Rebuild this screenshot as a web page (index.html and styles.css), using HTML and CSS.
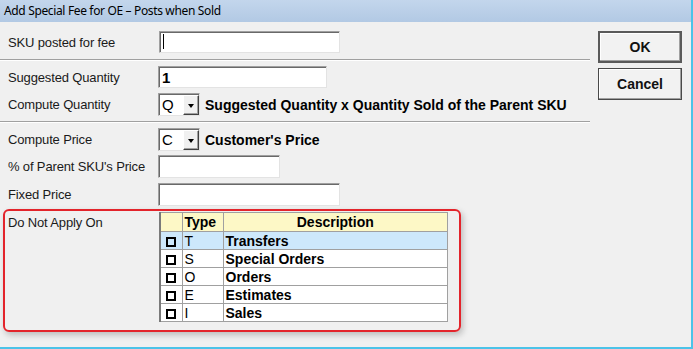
FILE: index.html
```html
<!DOCTYPE html>
<html lang="en">
<head>
    <meta charset="UTF-8">
    <title>Add Special Fee for OE</title>
    <link rel="stylesheet" href="styles.css">
</head>
<body>
    <div class="window">
        <div class="title-bar">Add Special Fee for OE – Posts when Sold</div>
        <div class="dialog">
            <div class="form">
                <div class="row row-first">
                    <span class="label">SKU posted for fee</span>
                    <div class="field field-sku"><span class="caret"></span></div>
                </div>
                <div class="separator"></div>
                <div class="row">
                    <span class="label">Suggested Quantity</span>
                    <div class="field field-qty">1</div>
                </div>
                <div class="row row-combo">
                    <span class="label">Compute Quantity</span>
                    <div class="combo">
                        <span class="combo-value">Q</span>
                        <span class="combo-btn"></span>
                    </div>
                    <span class="combo-text">Suggested Quantity x Quantity Sold of the Parent SKU</span>
                </div>
                <div class="separator"></div>
                <div class="row row-combo">
                    <span class="label">Compute Price</span>
                    <div class="combo">
                        <span class="combo-value">C</span>
                        <span class="combo-btn"></span>
                    </div>
                    <span class="combo-text">Customer's Price</span>
                </div>
                <div class="row row-pct">
                    <span class="label">% of Parent SKU's Price</span>
                    <div class="field field-pct"></div>
                </div>
                <div class="row row-fixed">
                    <span class="label">Fixed Price</span>
                    <div class="field field-fixed"></div>
                </div>

                <div class="exclude-group">
                    <span class="label label-top">Do Not Apply On</span>
                    <table class="grid">
                        <thead>
                            <tr>
                                <th class="col-check"></th>
                                <th class="col-type">Type</th>
                                <th class="col-desc">Description</th>
                            </tr>
                        </thead>
                        <tbody>
                            <tr class="selected">
                                <td class="col-check"><span class="box"></span></td>
                                <td class="col-type">T</td>
                                <td class="col-desc">Transfers</td>
                            </tr>
                            <tr>
                                <td class="col-check"><span class="box"></span></td>
                                <td class="col-type">S</td>
                                <td class="col-desc">Special Orders</td>
                            </tr>
                            <tr>
                                <td class="col-check"><span class="box"></span></td>
                                <td class="col-type">O</td>
                                <td class="col-desc">Orders</td>
                            </tr>
                            <tr>
                                <td class="col-check"><span class="box"></span></td>
                                <td class="col-type">E</td>
                                <td class="col-desc">Estimates</td>
                            </tr>
                            <tr>
                                <td class="col-check"><span class="box"></span></td>
                                <td class="col-type">I</td>
                                <td class="col-desc">Sales</td>
                            </tr>
                        </tbody>
                    </table>
                </div>
            </div>

            <div class="buttons">
                <button class="btn btn-default">OK</button>
                <button class="btn">Cancel</button>
            </div>
        </div>
    </div>
</body>
</html>
```

FILE: styles.css
```css
html, body {
    margin: 0;
    padding: 0;
    background: #f0f0f0;
}
body {
    font-family: 'Liberation Sans', Arial, sans-serif;
    font-size: 13px;
    color: #000;
}

.window {
    width: 691px;
    height: 347px;
    border-right: 2px solid #4cc3e8;
    border-bottom: 2px solid #4cc3e8;
    overflow: hidden;
}

.title-bar {
    height: 22px;
    line-height: 21px;
    padding-left: 4px;
    background: linear-gradient(#c3d6ec, #b2c9e4);
    font-family: 'Noto Sans', 'Open Sans', sans-serif;
    font-size: 12px;
    letter-spacing: -0.35px;
    color: #000;
}

.dialog {
    display: flex;
}

.form {
    width: 590px;
    padding-top: 9px;
}

/* 每一列：左邊標籤 + 右邊欄位 */
.row {
    display: flex;
    align-items: center;
    height: 22px;
    margin-bottom: 5px;
}
.row-combo,
.row-pct,
.row-fixed {
    height: 23px;
}
.row-pct {
    margin-bottom: 5px;
}
.row-combo + .row-pct {
    margin-top: -1px;
}
.row-fixed {
    margin-bottom: 3px;
}
.label {
    flex-shrink: 0;
    width: 150px;
    padding-left: 8px;
    letter-spacing: -0.15px;
    color: #1a1a1a;
}

.separator {
    height: 1px;
    background: #a0a0a0;
    border-bottom: 1px solid #fff;
    margin: 6px 0 5px;
}
.row-combo + .separator {
    margin-top: 5px;
}

/* 凹陷的 3D 輸入框 */
.field {
    box-sizing: border-box;
    height: 100%;
    background: #fff;
    border: 1px solid;
    border-color: #a0a0a0 #e3e3e3 #e3e3e3 #a0a0a0;
    box-shadow: inset 1px 1px 0 #696969;
    padding: 2px 0 0 3px;
    font-size: 15px;
    font-weight: bold;
    line-height: 17px;
}
.field-sku {
    width: 181px;
    margin-left: 1px;
}
.field-qty {
    width: 169px;
}
.field-pct {
    width: 122px;
}
.field-fixed {
    width: 182px;
}
.caret {
    display: block;
    width: 1px;
    height: 15px;
    background: #000;
}

.combo {
    display: flex;
    box-sizing: border-box;
    width: 42px;
    height: 100%;
    background: #fff;
    border: 1px solid;
    border-color: #a0a0a0 #e3e3e3 #e3e3e3 #a0a0a0;
    box-shadow: inset 1px 1px 0 #696969;
}
.combo-value {
    flex: 1;
    padding: 2px 0 0 3px;
    font-size: 15px;
    line-height: 17px;
}
.combo-btn {
    position: relative;
    box-sizing: border-box;
    width: 16px;
    margin: 1px 0 0;
    background: #f0f0f0;
    border: 1px solid;
    border-color: #fff #404040 #404040 #fff;
    box-shadow: inset -1px -1px 0 #a0a0a0;
}
.combo-btn::after {
    content: '';
    position: absolute;
    left: 4px;
    top: 8px;
    border-left: 3px solid transparent;
    border-right: 3px solid transparent;
    border-top: 4px solid #000;
}
.combo-text {
    margin-left: 5px;
    font-size: 14px;
    font-weight: bold;
}

/* 紅框：不套用的單據類型 */
.exclude-group {
    display: flex;
    align-items: flex-start;
    width: 451px;
    height: 118px;
    margin-left: 3px;
    padding: 1px 0 0 3px;
    border: 2px solid #e3242b;
    border-radius: 6px;
    box-shadow: 2px 3px 6px rgba(0, 0, 0, 0.22);
}
.label-top {
    width: 151px;
    padding-left: 0;
    margin-top: 3px;
}

.grid {
    border-collapse: collapse;
    width: 289px;
    border-left: 2px solid #7a7a7a;
    border-top: 1px solid #9a9a9a;
    table-layout: fixed;
}
.grid th,
.grid td {
    box-sizing: border-box;
    padding: 0 2px;
    border: 1px solid #a0a0a0;
    font-size: 14px;
    white-space: nowrap;
    overflow: hidden;
}
.grid th {
    height: 19px;
    background: #fdf8c6;
    font-weight: bold;
    text-align: left;
}
.grid td {
    height: 18px;
    background: #fff;
}
.grid tr.selected td {
    background: #cde8fb;
}
.col-check {
    width: 22px;
    text-align: center;
}
.grid td.col-check {
    padding: 0;
}
.col-type {
    width: 41px;
}
.grid .col-desc {
    font-weight: bold;
}
.grid th.col-desc {
    text-align: center;
}
.box {
    display: inline-block;
    width: 6px;
    height: 6px;
    border: 2px solid #000;
    vertical-align: -1px;
}

.buttons {
    display: flex;
    flex-direction: column;
    gap: 5px;
    margin-left: 8px;
    padding-top: 9px;
}
.btn {
    width: 84px;
    height: 32px;
    background: #f2f2f2;
    border: 1px solid #4a4a4a;
    box-shadow: inset -1px -1px 0 #a0a0a0, inset 1px 1px 0 #fff;
    font-family: 'Liberation Sans', Arial, sans-serif;
    font-size: 14px;
    font-weight: bold;
    color: #111;
    padding: 0;
}
.btn-default {
    border-width: 2px;
    border-color: #5a5a5a;
}
```
